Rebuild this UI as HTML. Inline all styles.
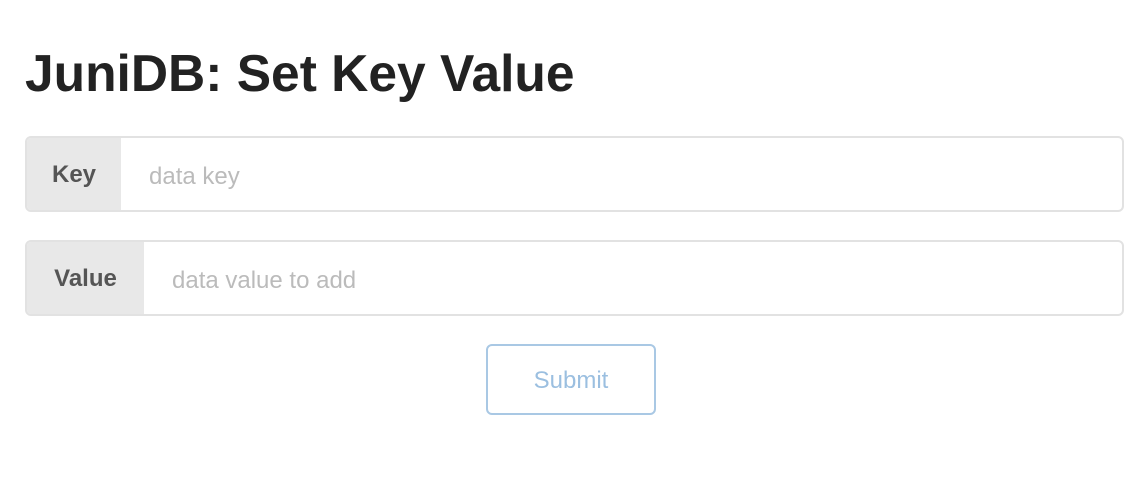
<!DOCTYPE html>
<html><head><style>
body{margin:0;background:#fff;font-family:"Liberation Sans",sans-serif;width:1130px;height:484px;overflow:hidden}
h1{position:absolute;left:25px;top:43px;margin:0;font-size:51.5px;font-weight:bold;color:#222;letter-spacing:0}
.grp{position:absolute;left:25px;width:1099px;height:76px;border:2px solid #e2e2e2;border-radius:6px;box-sizing:border-box;display:flex;overflow:hidden}
.lab{background:#e8e8e8;color:#555;font-weight:bold;font-size:24px;display:flex;align-items:center;justify-content:center;padding-top:1px}
.ph{color:#bbb;font-size:24px;display:flex;align-items:center;padding-left:28px;padding-top:6px}
.btn{position:absolute;left:486px;top:344px;width:170px;height:71px;border:2px solid #a9c8e4;border-radius:6px;box-sizing:border-box;color:#9bbfe0;font-size:24px;display:flex;align-items:center;justify-content:center;padding-top:3px}
</style></head><body>
<h1>JuniDB: Set Key Value</h1>
<div class="grp" style="top:136px"><div class="lab" style="width:94px">Key</div><div class="ph">data key</div></div>
<div class="grp" style="top:240px"><div class="lab" style="width:117px">Value</div><div class="ph">data value to add</div></div>
<div class="btn">Submit</div>
</body></html>
